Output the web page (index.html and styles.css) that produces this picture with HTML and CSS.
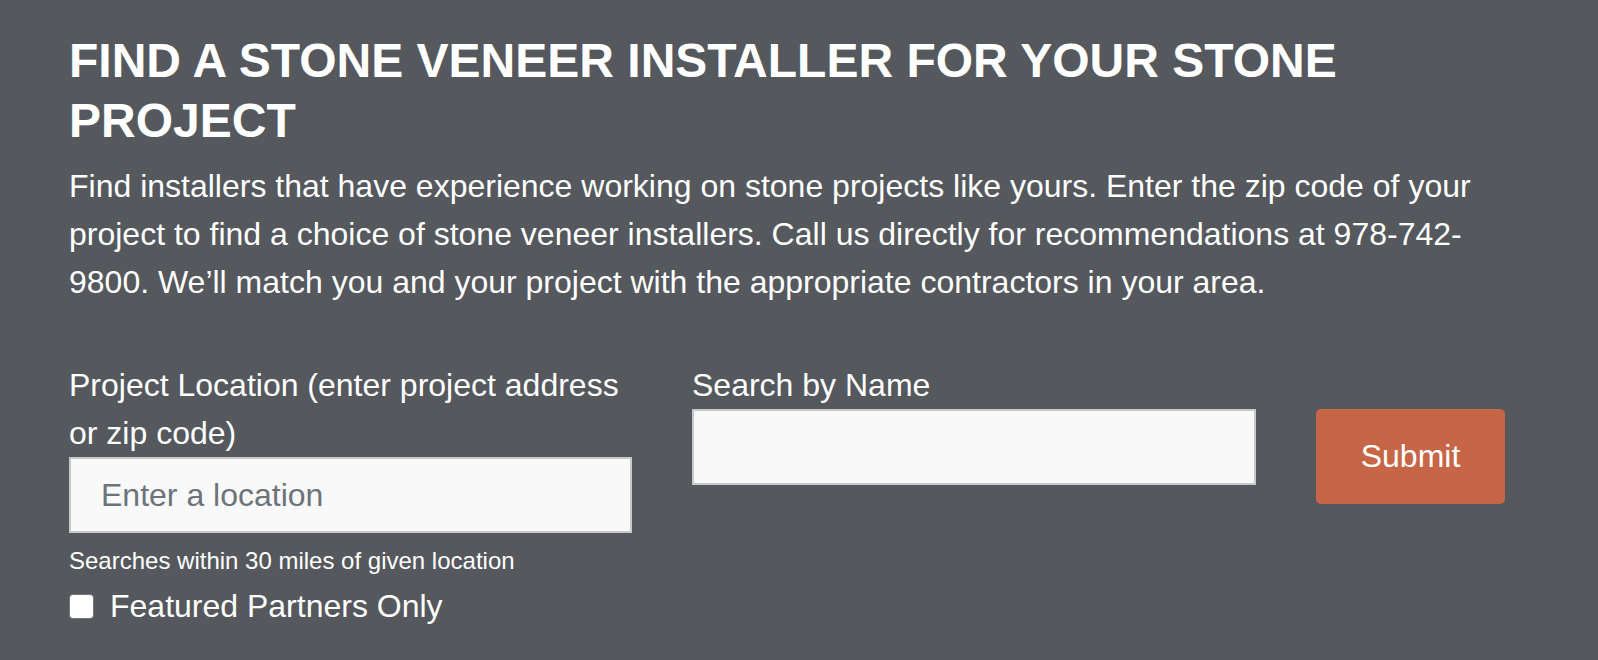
FILE: index.html
```html
<!DOCTYPE html>
<html lang="en">
<head>
<meta charset="utf-8">
<title>Find a Stone Veneer Installer</title>
<link rel="stylesheet" href="styles.css">
</head>
<body>
<main class="finder">
  <h1 class="finder-title">FIND A STONE VENEER INSTALLER FOR YOUR STONE PROJECT</h1>
  <p class="finder-intro">Find installers that have experience working on stone projects like yours. Enter the zip code of your project to find a choice of stone veneer installers. Call us directly for recommendations at 978-742-9800. We’ll match you and your project with the appropriate contractors in your area.</p>
  <form class="finder-form">
    <div class="field field-location">
      <label class="field-label" for="loc">Project Location (enter project address or zip code)</label>
      <input class="field-input" id="loc" type="text" placeholder="Enter a location">
      <small class="field-hint">Searches within 30 miles of given location</small>
      <label class="check">
        <input class="check-box" type="checkbox">
        <span class="check-text">Featured Partners Only</span>
      </label>
    </div>
    <div class="field field-name">
      <label class="field-label" for="name">Search by Name</label>
      <input class="field-input" id="name" type="text">
    </div>
    <div class="field-submit">
      <button class="submit-btn" type="button">Submit</button>
    </div>
  </form>
</main>
</body>
</html>
```
FILE: styles.css
```css
html, body {
  margin: 0;
  padding: 0;
}
body {
  background: #55585d;
  color: #ffffff;
  font-family: "Liberation Sans", Arial, Helvetica, sans-serif;
  font-size: 32px;
  line-height: 48px;
}
.finder {
  width: 1460px;
  padding: 31px 0 0 69px;
}
.finder-title {
  margin: 0;
  font-size: 48px;
  line-height: 60px;
  font-weight: 700;
}
.finder-intro {
  margin: 11px 0 0;
}
.finder-form {
  display: flex;
  align-items: flex-start;
  gap: 60px;
  margin-top: 55px;
}
.field {
  display: flex;
  flex-direction: column;
}
.field-location {
  width: 563px;
}
.field-name {
  width: 564px;
}
.field-label {
  display: block;
}
.field-input {
  box-sizing: border-box;
  width: 100%;
  height: 76px;
  margin: 0;
  padding: 0 30px;
  border: 2px solid #c8c8c8;
  border-radius: 0;
  background: #f9f9f9;
  font-family: inherit;
  font-size: 32px;
  color: #333;
  outline: none;
}
.field-input::placeholder {
  color: #6c737b;
}
.field-hint {
  display: block;
  margin-top: 10px;
  font-size: 24px;
  line-height: 36px;
}
.check {
  display: flex;
  align-items: center;
  gap: 16px;
  margin-top: 3px;
}
.check-box {
  appearance: none;
  -webkit-appearance: none;
  box-sizing: border-box;
  width: 25px;
  height: 25px;
  margin: 0;
  border: 1px solid #767676;
  border-radius: 4px;
  background: #ffffff;
}
.field-submit {
  padding-top: 48px;
}
.submit-btn {
  width: 189px;
  height: 95px;
  border: 0;
  border-radius: 5px;
  background: #c66647;
  color: #ffffff;
  font-family: inherit;
  font-size: 32px;
  cursor: pointer;
}
```
